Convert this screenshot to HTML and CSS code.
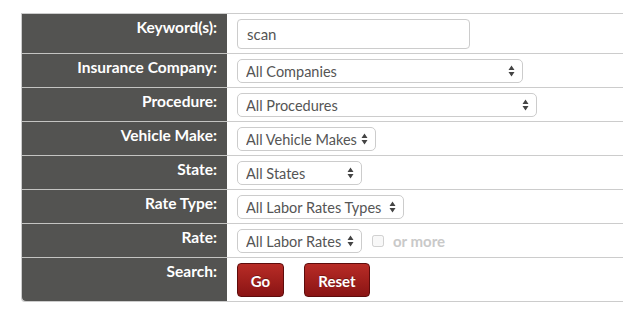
FILE: index.html
```html
<!DOCTYPE html>
<html>
    <head>
        <title>Labor Rate Search</title>
        <link rel="stylesheet" href="styles.css">
    </head>
    <body>
        <div class="searchWrap">
            <table class="searchTable">
                <colgroup>
                    <col class="labelCol">
                    <col>
                </colgroup>
                <tr>
                    <th>Keyword(s):</th>
                    <td><input type="text" class="keywordInput" value="scan"></td>
                </tr>
                <tr>
                    <th>Insurance Company:</th>
                    <td>
                        <span class="selectBox wCompany">
                            <select><option>All Companies</option></select>
                            <svg class="selectArrow" width="7" height="12" viewBox="0 0 7 12"><path d="M3.5 0.5 L6.5 5 L0.5 5 Z M0.5 7 L6.5 7 L3.5 11.5 Z" fill="#444"/></svg>
                        </span>
                    </td>
                </tr>
                <tr>
                    <th>Procedure:</th>
                    <td>
                        <span class="selectBox wProcedure">
                            <select><option>All Procedures</option></select>
                            <svg class="selectArrow" width="7" height="12" viewBox="0 0 7 12"><path d="M3.5 0.5 L6.5 5 L0.5 5 Z M0.5 7 L6.5 7 L3.5 11.5 Z" fill="#444"/></svg>
                        </span>
                    </td>
                </tr>
                <tr>
                    <th>Vehicle Make:</th>
                    <td>
                        <span class="selectBox wMake">
                            <select><option>All Vehicle Makes</option></select>
                            <svg class="selectArrow" width="7" height="12" viewBox="0 0 7 12"><path d="M3.5 0.5 L6.5 5 L0.5 5 Z M0.5 7 L6.5 7 L3.5 11.5 Z" fill="#444"/></svg>
                        </span>
                    </td>
                </tr>
                <tr>
                    <th>State:</th>
                    <td>
                        <span class="selectBox wState">
                            <select><option>All States</option></select>
                            <svg class="selectArrow" width="7" height="12" viewBox="0 0 7 12"><path d="M3.5 0.5 L6.5 5 L0.5 5 Z M0.5 7 L6.5 7 L3.5 11.5 Z" fill="#444"/></svg>
                        </span>
                    </td>
                </tr>
                <tr>
                    <th>Rate Type:</th>
                    <td>
                        <span class="selectBox wRateType">
                            <select><option>All Labor Rates Types</option></select>
                            <svg class="selectArrow" width="7" height="12" viewBox="0 0 7 12"><path d="M3.5 0.5 L6.5 5 L0.5 5 Z M0.5 7 L6.5 7 L3.5 11.5 Z" fill="#444"/></svg>
                        </span>
                    </td>
                </tr>
                <tr>
                    <th>Rate:</th>
                    <td>
                        <div class="rateLine">
                            <span class="selectBox wRate">
                                <select><option>All Labor Rates</option></select>
                                <svg class="selectArrow" width="7" height="12" viewBox="0 0 7 12"><path d="M3.5 0.5 L6.5 5 L0.5 5 Z M0.5 7 L6.5 7 L3.5 11.5 Z" fill="#444"/></svg>
                            </span>
                            <label class="orMore"><input type="checkbox" disabled> or more</label>
                        </div>
                    </td>
                </tr>
                <tr>
                    <th>Search:</th>
                    <td>
                        <div class="buttonLine">
                            <button class="redBtn btnGo">Go</button>
                            <button class="redBtn btnReset">Reset</button>
                        </div>
                    </td>
                </tr>
            </table>
        </div>
    </body>
</html>
```

FILE: styles.css
```css
html{
    overflow: hidden;
}

body{
    margin: 0;
    padding: 0;
    background-color: #ffffff;
    font-family: "Lato", "Open Sans", sans-serif;
    font-size: 15px;
    color: #555555;
}

.searchWrap{
    padding: 13px 0 0 21px;
}

.searchTable{
    width: 602px;
    table-layout: fixed;
    border-collapse: separate;
    border-spacing: 0;
    border: 1px solid #cccccc;
    border-right: none;
    border-radius: 0 0 0 4px;
}

.labelCol{
    width: 205px;
}

.searchTable th{
    background-color: #535351;
    color: #ffffff;
    font-weight: bold;
    font-size: 15.5px;
    text-align: right;
    vertical-align: top;
    padding: 3px 10px 0 10px;
    line-height: 20px;
    border-top: 1px solid #c4c4c2;
    white-space: nowrap;
}

.searchTable td{
    vertical-align: top;
    padding: 5px 10px 4px 10px;
    border-top: 1px solid #cccccc;
}

.searchTable tr:first-child th,
.searchTable tr:first-child td{
    border-top: none;
}

.searchTable tr:last-child th{
    border-radius: 0 0 0 4px;
}

.keywordInput{
    width: 233px;
    height: 30px;
    box-sizing: border-box;
    border: 1px solid #cccccc;
    border-radius: 4px;
    padding: 0 9px;
    font-family: inherit;
    font-size: 15px;
    color: #555555;
    display: block;
}

.selectBox{
    position: relative;
    display: block;
    height: 24px;
}

.selectBox select{
    -webkit-appearance: none;
    appearance: none;
    width: 100%;
    height: 24px;
    box-sizing: border-box;
    border: 1px solid #cccccc;
    border-radius: 5px;
    background-color: #ffffff;
    padding: 0 14px 0 8px;
    font-family: inherit;
    font-size: 14.5px;
    color: #555555;
    display: block;
}

.selectArrow{
    position: absolute;
    right: 8px;
    top: 6px;
    pointer-events: none;
}

.wCompany{ width: 286px; }
.wProcedure{ width: 300px; }
.wMake{ width: 139px; }
.wState{ width: 125px; }
.wRateType{ width: 167px; }
.wRate{ width: 125px; }

.rateLine{
    display: flex;
    align-items: center;
    gap: 10px;
}

.orMore{
    display: flex;
    align-items: center;
    gap: 9px;
    color: #c9c9c9;
    font-weight: bold;
}

.orMore input{
    margin: 0;
    width: 12px;
    height: 12px;
}

.buttonLine{
    display: flex;
    gap: 20px;
}

.redBtn{
    height: 34px;
    border: 1px solid #5e0c0c;
    border-radius: 4px;
    background: linear-gradient(#b82c26, #8a1414);
    color: #ffffff;
    font-family: inherit;
    font-size: 15px;
    font-weight: bold;
    padding: 2px 0 0 0;
    text-shadow: 0 -1px 0 rgba(0, 0, 0, 0.3);
}

.btnGo{ width: 47px; }
.btnReset{ width: 66px; }
```
